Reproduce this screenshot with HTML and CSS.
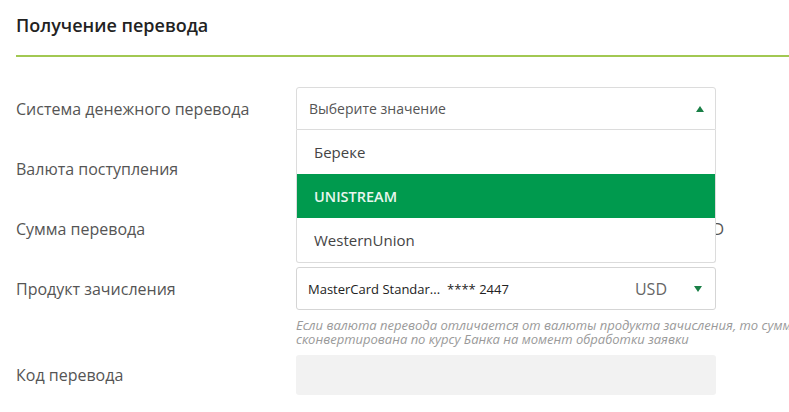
FILE: index.html
```html
<!DOCTYPE html>
<html lang="ru">
<head>
<meta charset="utf-8">
<title>Получение перевода</title>
<link rel="stylesheet" href="styles.css">
</head>
<body>
<div class="page">
  <h2 class="title">Получение перевода</h2>
  <div class="rule"></div>
  <div class="form">
    <div class="row">
      <div class="label">Система денежного перевода</div>
      <div class="field select open">
        <div class="select-head">
          <span class="placeholder">Выберите значение</span>
          <span class="arrow up"></span>
        </div>
        <ul class="menu">
          <li class="option">Береке</li>
          <li class="option active">UNISTREAM</li>
          <li class="option">WesternUnion</li>
        </ul>
      </div>
    </div>
    <div class="row">
      <div class="label">Валюта поступления</div>
      <div class="field box"></div>
    </div>
    <div class="row">
      <div class="label">Сумма перевода</div>
      <div class="field sum">
        <div class="box sum-input"></div>
        <span class="sum-cur">USD</span>
      </div>
    </div>
    <div class="row">
      <div class="label">Продукт зачисления</div>
      <div class="field box product">
        <span class="product-name">MasterCard Standar...</span>
        <span class="product-num">**** 2447</span>
        <span class="product-cur">USD</span>
        <span class="arrow down"></span>
      </div>
    </div>
    <div class="hint">Если валюта перевода отличается от валюты продукта зачисления, то сумма будет<br>сконвертирована по курсу Банка на момент обработки заявки</div>
    <div class="row code-row">
      <div class="label">Код перевода</div>
      <div class="field box disabled"></div>
    </div>
  </div>
</div>
</body>
</html>
```

FILE: styles.css
```css
html, body {
  margin: 0;
  padding: 0;
  background: #fff;
  overflow: hidden;
}
body {
  font-family: "Open Sans", "Noto Sans", sans-serif;
  color: #555;
}
.page {
  padding: 13px 0 0 16px;
}
.title {
  margin: 0 0 18px;
  font-size: 18px;
  line-height: 24px;
  font-weight: 600;
  color: #222;
}
.rule {
  height: 2px;
  background: #a2c852;
}
.form {
  padding-top: 30px;
  display: flex;
  flex-direction: column;
}
.row {
  display: flex;
  align-items: center;
  height: 43px;
  margin-bottom: 17px;
}
.label {
  width: 280px;
  flex: none;
  font-size: 16px;
  line-height: 24px;
  color: #555;
}
.field {
  width: 420px;
  height: 43px;
  box-sizing: border-box;
  flex: none;
}
.box {
  border: 1px solid #d5d5d5;
  border-radius: 3px;
  background: #fff;
}
.select {
  position: relative;
  z-index: 2;
}
.select-head {
  height: 43px;
  box-sizing: border-box;
  border: 1px solid #dcdcdc;
  border-radius: 3px 3px 0 0;
  display: flex;
  align-items: center;
  justify-content: space-between;
  padding: 0 11px 0 12px;
  background: #fff;
}
.placeholder {
  font-size: 14px;
  color: #555;
}
.arrow {
  width: 0;
  height: 0;
  border-left: 4px solid transparent;
  border-right: 4px solid transparent;
}
.arrow.up {
  border-bottom: 6px solid #1a7f46;
}
.arrow.down {
  border-top: 6px solid #1a7f46;
}
.menu {
  position: absolute;
  top: 43px;
  left: 0;
  right: 0;
  margin: 0;
  padding: 0;
  list-style: none;
  background: #fff;
  border: 1px solid #dcdcdc;
  border-top: none;
  border-radius: 0 0 3px 3px;
}
.option {
  height: 44px;
  display: flex;
  align-items: center;
  padding-left: 17px;
  font-size: 15px;
  color: #444;
}
.option.active {
  background: #009a4e;
  color: #e9f6ee;
  font-size: 14.5px;
  font-weight: 600;
}
.sum {
  display: flex;
  align-items: center;
  width: 427px;
}
.sum-input {
  width: 420px;
  height: 43px;
  box-sizing: border-box;
  flex: none;
}
.sum-cur {
  font-size: 16px;
  color: #555;
  margin-left: -24px;
}
.product {
  display: flex;
  align-items: center;
  padding: 0 13px 0 11px;
}
.product-name {
  font-size: 13px;
  color: #222;
  white-space: nowrap;
}
.product-num {
  font-size: 13px;
  color: #222;
  margin-left: 7px;
  flex: 1;
  white-space: nowrap;
}
.product-cur {
  font-size: 16px;
  color: #666;
  margin-right: 27px;
}
.hint {
  margin: -9px 0 9px 280px;
  font-size: 13px;
  line-height: 14px;
  font-style: italic;
  color: #9a9a9a;
  white-space: nowrap;
}
.code-row {
  height: 40px;
}
.field.disabled {
  height: 40px;
  border: none;
  background: #f2f2f2;
}
```
